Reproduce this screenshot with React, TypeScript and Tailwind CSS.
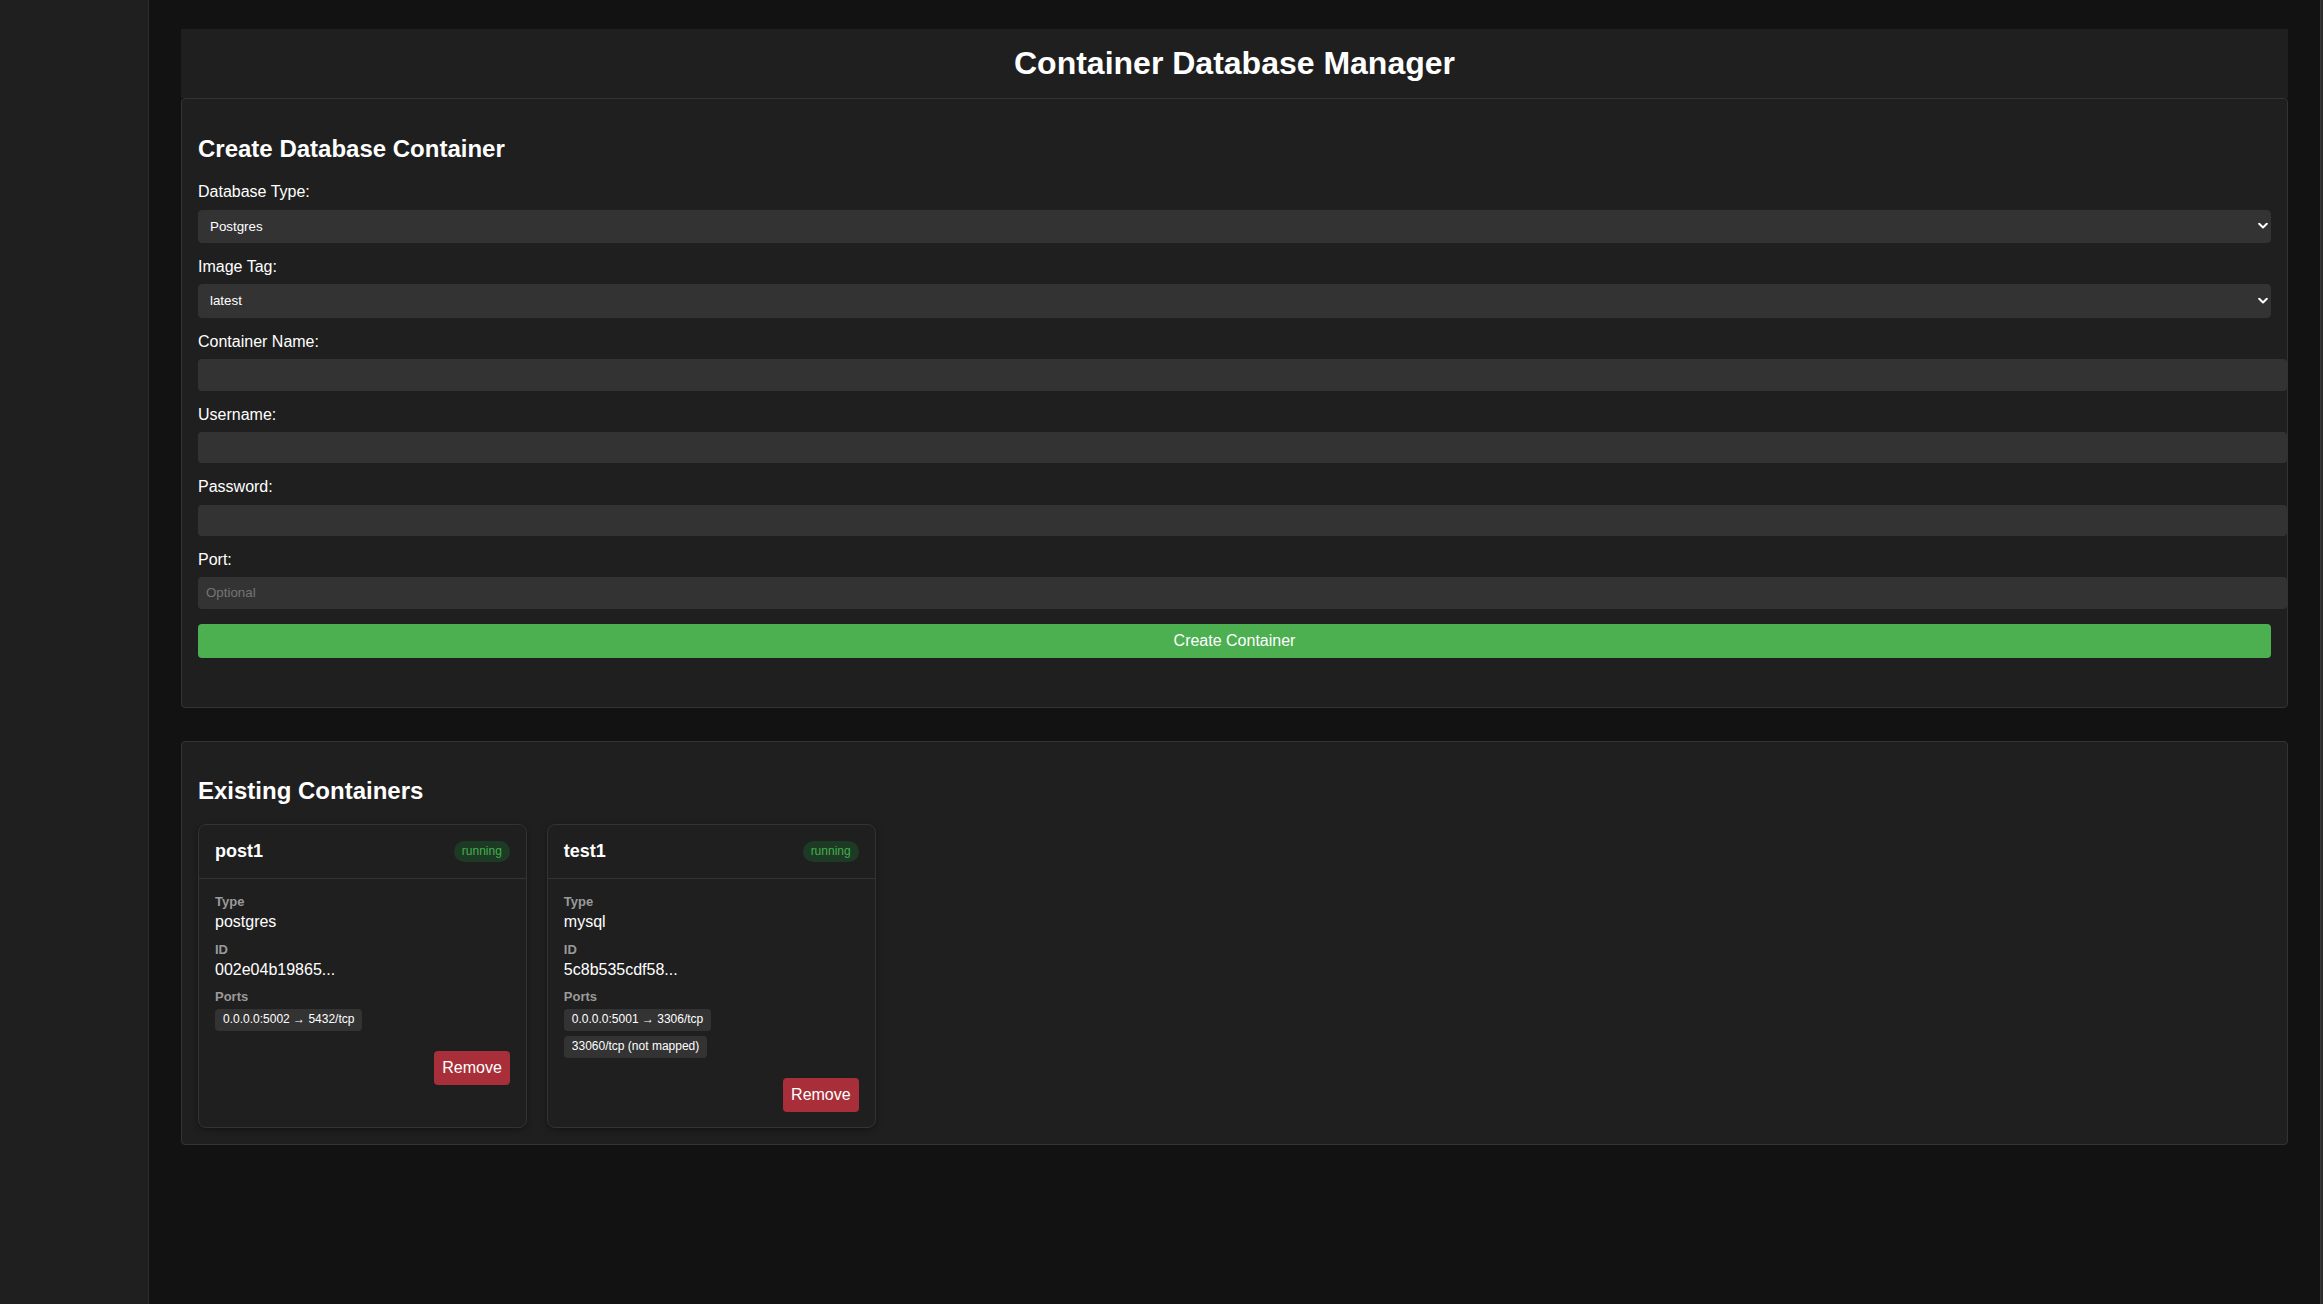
import { ReactNode } from "react";

type Container = {
  name: string;
  status: string;
  type: string;
  id: string;
  ports: string[];
};

const containers: Container[] = [
  {
    name: "post1",
    status: "running",
    type: "postgres",
    id: "002e04b19865...",
    ports: ["0.0.0.0:5002 → 5432/tcp"],
  },
  {
    name: "test1",
    status: "running",
    type: "mysql",
    id: "5c8b535cdf58...",
    ports: ["0.0.0.0:5001 → 3306/tcp", "33060/tcp (not mapped)"],
  },
];

const FormGroup = ({ label, children }: { label: string; children: ReactNode }) => (
  <div className="mb-[15px]">
    <label className="block mb-2 text-base leading-[1.15] text-white">{label}</label>
    {children}
  </div>
);

const Select = ({ value }: { value: string }) => (
  <div className="relative">
    <select
      defaultValue={value}
      className="appearance-none block w-full py-2 pl-[11px] pr-6 text-[13.33px] leading-[1.15] text-white bg-[#333] border border-[#333] rounded"
    >
      <option value={value}>{value}</option>
    </select>
    <svg
      className="absolute right-[3px] top-1/2 -translate-y-1/2 pointer-events-none"
      width="10"
      height="7"
      viewBox="0 0 10 7"
      fill="none"
    >
      <path d="M1.2 1.2 L5 5 L8.8 1.2" stroke="#fff" strokeWidth="2" strokeLinecap="round" strokeLinejoin="round" />
    </svg>
  </div>
);

const TextInput = ({ placeholder, type = "text" }: { placeholder?: string; type?: string }) => (
  <input
    type={type}
    placeholder={placeholder}
    className="block w-[calc(100%+16px)] p-2 text-[13.33px] leading-[1.15] text-white bg-[#333] rounded outline-none placeholder:text-[#757575]"
  />
);

const ContainerCard = ({ c }: { c: Container }) => (
  <div className="flex flex-col border border-[#333] rounded-lg bg-[#1f1f1f] shadow-[0_2px_6px_rgba(0,0,0,0.35)]">
    <div className="flex justify-between items-center p-4 border-b border-[#333]">
      <h3 className="text-[18px] font-bold leading-[1.15] text-white">{c.name}</h3>
      <span className="text-xs leading-[1.15] px-2 py-1 rounded-full bg-[#1d3a25] text-[#46ad4e]">
        {c.status}
      </span>
    </div>
    <div className="px-4 pt-4 pb-[15px]">
      <div className="mb-[11px]">
        <div className="text-[13px] font-bold leading-[1.15] text-[#9a9a9a] mb-[3px]">Type</div>
        <div className="text-base leading-[1.15] text-white">{c.type}</div>
      </div>
      <div className="mb-[11px]">
        <div className="text-[13px] font-bold leading-[1.15] text-[#9a9a9a] mb-[3px]">ID</div>
        <div className="text-base leading-[1.15] text-white">{c.id}</div>
      </div>
      <div>
        <div className="text-[13px] font-bold leading-[1.15] text-[#9a9a9a] mb-[4px]">Ports</div>
        <div className="flex flex-col items-start gap-[5px]">
          {c.ports.map((p) => (
            <span key={p} className="text-xs leading-[1.15] px-2 py-1 bg-[#333] rounded text-white">
              {p}
            </span>
          ))}
        </div>
      </div>
      <div className="flex justify-end mt-5">
        <button className="px-2 py-2 text-base leading-[1.15] text-white bg-[#a82f39] rounded">Remove</button>
      </div>
    </div>
  </div>
);

export default function App() {
  return (
    <div className="flex min-h-screen bg-[#121212] text-white font-['Liberation_Sans',Arial,sans-serif]">
      <aside className="w-[149px] shrink-0 bg-[#1f1f1f] border-r border-[#2c2c2c]" />
      <main className="flex-1 px-8 pt-[29px] pb-8">
        <header className="bg-[#1f1f1f] p-4 text-center">
          <h1 className="text-[32px] font-bold leading-[1.15]">Container Database Manager</h1>
        </header>

        <section className="bg-[#1f1f1f] border border-[#333] rounded p-4">
          <h2 className="text-2xl font-bold leading-[1.15] mt-5 mb-[21px]">Create Database Container</h2>
          <form onSubmit={(e) => e.preventDefault()} className="mb-[33px]">
            <FormGroup label="Database Type:">
              <Select value="Postgres" />
            </FormGroup>
            <FormGroup label="Image Tag:">
              <Select value="latest" />
            </FormGroup>
            <FormGroup label="Container Name:">
              <TextInput />
            </FormGroup>
            <FormGroup label="Username:">
              <TextInput />
            </FormGroup>
            <FormGroup label="Password:">
              <TextInput type="password" />
            </FormGroup>
            <FormGroup label="Port:">
              <TextInput placeholder="Optional" />
            </FormGroup>
            <button className="block w-full py-2 text-base leading-[1.15] text-white bg-[#4caf50] rounded">
              Create Container
            </button>
          </form>
        </section>

        <section className="mt-[33px] bg-[#1f1f1f] border border-[#333] rounded p-4">
          <h2 className="text-2xl font-bold leading-[1.15] mt-[19px] mb-[19px]">Existing Containers</h2>
          <div className="grid grid-cols-[repeat(auto-fill,minmax(300px,1fr))] gap-5">
            {containers.map((c) => (
              <ContainerCard key={c.name} c={c} />
            ))}
          </div>
        </section>
      </main>
      <div className="w-[3px] shrink-0 bg-[#2a2a2a] border-l border-[#383838]" />
    </div>
  );
}
